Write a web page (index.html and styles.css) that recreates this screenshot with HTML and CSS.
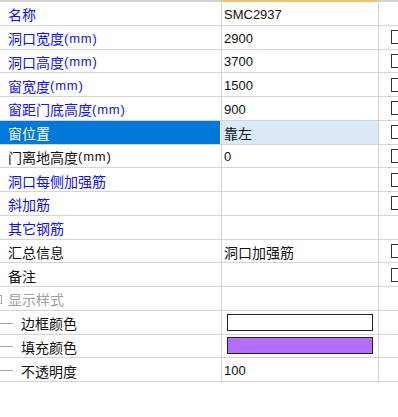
FILE: index.html
```html
<!DOCTYPE html>
<html>
<head>
<meta charset="utf-8">
<link rel="stylesheet" href="styles.css">
</head>
<body>
<div class="grid">
  <div class="row first">
    <div class="name blue">名称</div>
    <div class="val num top">SMC2937</div>
    <div class="chk top-gray"></div>
  </div>
  <div class="row">
    <div class="name blue">洞口宽度<span class="mm">(mm)</span></div>
    <div class="val num">2900</div>
    <div class="chk"><span class="box"></span></div>
  </div>
  <div class="row">
    <div class="name blue">洞口高度<span class="mm">(mm)</span></div>
    <div class="val num">3700</div>
    <div class="chk"><span class="box"></span></div>
  </div>
  <div class="row">
    <div class="name blue">窗宽度<span class="mm">(mm)</span></div>
    <div class="val num">1500</div>
    <div class="chk"><span class="box"></span></div>
  </div>
  <div class="row">
    <div class="name blue">窗距门底高度<span class="mm">(mm)</span></div>
    <div class="val num">900</div>
    <div class="chk"><span class="box"></span></div>
  </div>
  <div class="row selected">
    <div class="name">窗位置</div>
    <div class="val">靠左</div>
    <div class="chk"><span class="box"></span></div>
  </div>
  <div class="row">
    <div class="name">门离地高度<span class="mm">(mm)</span></div>
    <div class="val num">0</div>
    <div class="chk"><span class="box"></span></div>
  </div>
  <div class="row">
    <div class="name blue">洞口每侧加强筋</div>
    <div class="val"></div>
    <div class="chk"><span class="box"></span></div>
  </div>
  <div class="row">
    <div class="name blue">斜加筋</div>
    <div class="val"></div>
    <div class="chk"><span class="box"></span></div>
  </div>
  <div class="row">
    <div class="name blue">其它钢筋</div>
    <div class="val"></div>
    <div class="chk"></div>
  </div>
  <div class="row">
    <div class="name">汇总信息</div>
    <div class="val">洞口加强筋</div>
    <div class="chk"><span class="box"></span></div>
  </div>
  <div class="row">
    <div class="name">备注</div>
    <div class="val"></div>
    <div class="chk"><span class="box"></span></div>
  </div>
  <div class="row">
    <div class="name group"><span class="expander"></span>显示样式</div>
    <div class="val"></div>
    <div class="chk"></div>
  </div>
  <div class="row">
    <div class="name child"><span class="branch"></span>边框颜色</div>
    <div class="val"><span class="swatch white"></span></div>
    <div class="chk"></div>
  </div>
  <div class="row">
    <div class="name child"><span class="branch"></span>填充颜色</div>
    <div class="val"><span class="swatch purple"></span></div>
    <div class="chk"></div>
  </div>
  <div class="row">
    <div class="name child"><span class="branch"></span>不透明度</div>
    <div class="val num">100</div>
    <div class="chk"></div>
  </div>
</div>
</body>
</html>
```

FILE: styles.css
```css
html, body {
  margin: 0;
  padding: 0;
  background: #ffffff;
  overflow: hidden;
  width: 398px;
  height: 417px;
}
.grid {
  display: flex;
  flex-direction: column;
  width: 398px;
  font-family: "Noto Sans CJK SC", "Liberation Sans", sans-serif;
  font-size: 14px;
  color: #111111;
}
.row {
  display: grid;
  grid-template-columns: 221px 157px 20px;
  height: 23.75px;
  box-sizing: border-box;
  border-bottom: 1px solid #d4d4d4;
}
.row.first {
  height: 25.75px;
}
.row > div {
  display: flex;
  align-items: center;
  box-sizing: border-box;
  overflow: hidden;
  white-space: nowrap;
  line-height: 1;
  padding-top: 2px;
}
.name {
  padding-left: 8px;
}
.first .name {
  border-top: 2px solid #d4d4d4;
}
.val {
  border-left: 1px solid #d4d4d4;
  padding-left: 2px;
}
.chk {
  border-left: 1px solid #d4d4d4;
  padding-left: 12px;
}
.row > .chk {
  padding-top: 0;
}
.top {
  border-top: 2px solid #f0c070;
}
.top-gray {
  border-top: 2px solid #d4d4d4;
}
.blue {
  color: #1010f0;
}
.mm {
  font-family: "Liberation Sans", sans-serif;
  font-size: 13px;
  letter-spacing: 0.8px;
}
.num {
  font-family: "Liberation Sans", sans-serif;
  font-size: 13px;
}
.selected .name {
  background: #0078d7;
  color: #ffffff;
  margin-right: 1px;
}
.selected .val {
  background: #dbe9f7;
}
.box {
  display: block;
  flex-shrink: 0;
  width: 13px;
  height: 14px;
  box-sizing: border-box;
  border: 1px solid #333333;
  background: #ffffff;
}
.group {
  color: #a0a0a0;
}
.expander {
  display: block;
  flex-shrink: 0;
  width: 9px;
  height: 9px;
  box-sizing: border-box;
  border: 1px solid #a8a8a8;
  margin-left: -15px;
  margin-right: 6px;
}
.row > .child {
  padding-left: 0;
}
.branch {
  display: block;
  flex-shrink: 0;
  width: 13px;
  height: 1px;
  background: #a8a8a8;
  margin-right: 8px;
}
.swatch {
  display: block;
  flex-shrink: 0;
  width: 146px;
  height: 17px;
  box-sizing: border-box;
  border: 1.5px solid #222222;
  margin-left: 3px;
  margin-top: -2px;
}
.swatch.white {
  background: #ffffff;
}
.swatch.purple {
  background: #b56dff;
}
```
